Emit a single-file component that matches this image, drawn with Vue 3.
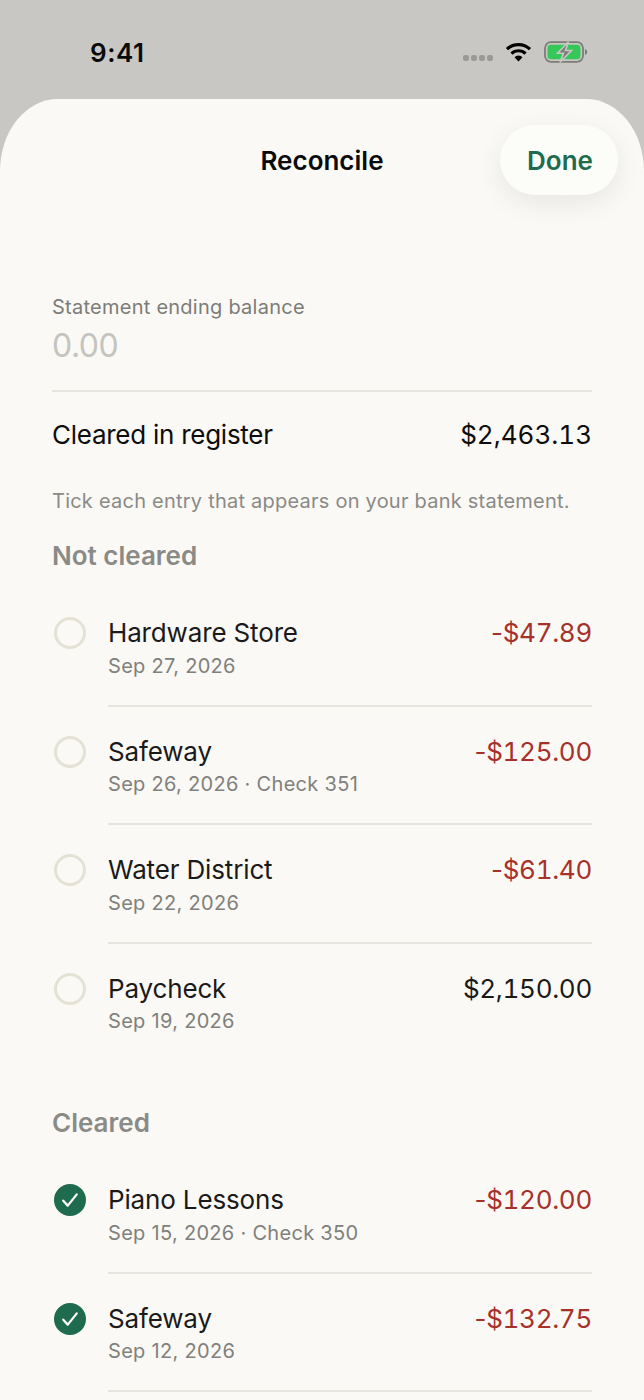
<template>
  <div class="screen">
    <div class="status">
      <span class="time">9:41</span>
      <div class="status-icons">
        <div class="dots"><i v-for="i in 4" :key="i" /></div>
        <svg class="wifi" width="27" height="20" viewBox="0 0 26 20">
          <path d="M1.500 7.200A16.500 16.500 0 0 1 24.500 7.200" fill="none" stroke="#000" stroke-width="3.200" />
          <path d="M6 11.600A10 10 0 0 1 20 11.600" fill="none" stroke="#000" stroke-width="3.200" />
          <path d="M9 15.200L13 19.500L17 15.200A5.600 5.600 0 0 0 9 15.200Z" fill="#000" />
        </svg>
        <svg class="battery" width="44" height="22" viewBox="0 0 44 22">
          <rect x="1" y="1.200" width="38" height="19.600" rx="6" fill="none" stroke="#7d7d78" stroke-width="1.800" />
          <rect x="3.500" y="3.700" width="33" height="14.600" rx="3.500" fill="#34c759" />
          <path d="M41 8v6c1.400-.5 2.200-1.700 2.200-3S42.400 8.500 41 8Z" fill="#7d7d78" />
          <path d="M24.500 0.800L13.500 12.300H19.500L16 21.200L27.500 9.500H21.500Z" fill="#7d7d78" stroke="#c8c7c3" stroke-width="1.600" />
        </svg>
      </div>
    </div>

    <div class="sheet">
      <header class="nav">
        <h1>Reconcile</h1>
        <button class="done">Done</button>
      </header>

      <section class="summary">
        <div class="label">Statement ending balance</div>
        <div class="placeholder">0.00</div>
        <div class="cleared-row">
          <span class="cleared-label">Cleared in register</span>
          <span class="money">$2,463.13</span>
        </div>
        <p class="hint">Tick each entry that appears on your bank statement.</p>
      </section>

      <section v-for="group in groups" :key="group.title" class="group">
        <h2>{{ group.title }}</h2>
        <div v-for="row in group.rows" :key="row.name + row.date" class="row">
          <span class="tick" :class="{ on: group.done }">
            <svg v-if="group.done" width="18" height="16" viewBox="0 0 16 14">
              <path d="M2 7.600L6 12L14 2" fill="none" stroke="#fff" stroke-width="2" stroke-linecap="round" stroke-linejoin="round" />
            </svg>
          </span>
          <div class="row-body">
            <div class="row-text">
              <div class="name">{{ row.name }}</div>
              <div class="date">{{ row.date }}</div>
            </div>
            <div class="amount money" :class="{ neg: row.neg }"><span v-if="row.neg" class="sign">-</span>{{ row.amount }}</div>
          </div>
        </div>
      </section>
    </div>
  </div>
</template>

<script setup>
const groups = [
  {
    title: 'Not cleared',
    done: false,
    rows: [
      { name: 'Hardware Store', date: 'Sep 27, 2026', amount: '$47.89', neg: true },
      { name: 'Safeway', date: 'Sep 26, 2026 · Check 351', amount: '$125.00', neg: true },
      { name: 'Water District', date: 'Sep 22, 2026', amount: '$61.40', neg: true },
      { name: 'Paycheck', date: 'Sep 19, 2026', amount: '$2,150.00', neg: false }
    ]
  },
  {
    title: 'Cleared',
    done: true,
    rows: [
      { name: 'Piano Lessons', date: 'Sep 15, 2026 · Check 350', amount: '$120.00', neg: true },
      { name: 'Safeway', date: 'Sep 12, 2026', amount: '$132.75', neg: true }
    ]
  }
]
</script>

<style>
html,
body {
  margin: 0;
  background: #c8c7c3;
}
</style>

<style scoped>
.screen {
  height: 1400px;
  overflow: hidden;
  background: #c8c7c3;
  font-family: Inter, "Liberation Sans", sans-serif;
  color: #111;
}

.status {
  height: 99px;
  box-sizing: border-box;
  padding: 37px 56px 0 90px;
  display: flex;
  justify-content: space-between;
  align-items: flex-start;
}

.time {
  font-size: 26px;
  line-height: 32px;
  font-weight: 600;
  letter-spacing: 0.5px;
  color: #0a0a0a;
}

.status-icons {
  display: flex;
  align-items: center;
  height: 30px;
}

.dots {
  display: flex;
  gap: 2px;
  margin: 12px 12px 0 0;
}

.dots i {
  width: 6px;
  height: 6px;
  border-radius: 2px;
  background: #9a9a96;
}

.wifi {
  margin-right: 12px;
}

.sheet {
  height: 1301px;
  background: #faf9f5;
  border-radius: 58px 58px 0 0 / 72px 72px 0 0;
  padding: 0 52px;
  box-sizing: border-box;
}

.nav {
  height: 96px;
  position: relative;
  display: flex;
  justify-content: center;
  align-items: flex-end;
}

.nav h1 {
  margin: 0 0 18px;
  font-size: 26px;
  line-height: 32px;
  font-weight: 600;
  color: #0a0a0a;
}

.done {
  position: absolute;
  right: -26px;
  top: 26px;
  width: 118px;
  height: 70px;
  padding: 0 0 0 2px;
  border: 0;
  border-radius: 35px;
  background: #fcfcf8;
  box-shadow: 0 8px 28px rgba(0, 0, 0, 0.08);
  font: 600 26px Inter, "Liberation Sans", sans-serif;
  color: #1f6b4f;
}

.summary {
  padding-top: 99px;
}

.label {
  font-size: 20px;
  line-height: 26px;
  letter-spacing: 0.25px;
  color: #7c7c78;
}

.placeholder {
  margin-top: 6px;
  font-size: 32px;
  line-height: 40px;
  letter-spacing: -0.5px;
  color: #c4c4bf;
  padding-bottom: 24px;
  border-bottom: 2px solid #e6e6e1;
}

.cleared-row {
  display: flex;
  justify-content: space-between;
  font-size: 26px;
  line-height: 32px;
  margin-top: 27px;
  color: #0d0d0d;
}

.cleared-label {
  letter-spacing: -0.26px;
}

.money {
  font-feature-settings: "tnum";
}

.sign {
  font-feature-settings: normal;
}

.hint {
  margin: 37px 0 0;
  font-size: 20px;
  line-height: 26px;
  letter-spacing: 0.23px;
  color: #8a8a86;
}

.group h2 {
  margin: 0 0 16px;
  font-size: 26px;
  line-height: 32px;
  font-weight: 600;
  color: #8a8a86;
}

.summary + .group h2 {
  margin-top: 26px;
}

.group + .group {
  margin-top: 45px;
}

.row {
  display: flex;
  align-items: flex-start;
  gap: 22px;
}

.tick {
  flex: none;
  width: 32px;
  height: 32px;
  margin: 29px 0 0 2px;
  border: 3px solid #e3e2d5;
  border-radius: 50%;
  display: flex;
  align-items: center;
  justify-content: center;
  box-sizing: border-box;
}

.tick.on {
  background: #1f6b4f;
  border-color: #1f6b4f;
}

.row-body {
  flex: 1;
  min-height: 118.500px;
  box-sizing: border-box;
  padding-top: 29px;
  display: flex;
  justify-content: space-between;
  align-items: flex-start;
  border-bottom: 2px solid #e6e6e1;
}

.name {
  font-size: 26px;
  line-height: 32px;
  letter-spacing: -0.15px;
  color: #1a1a1a;
}

.date {
  margin-top: 3.500px;
  font-size: 20px;
  line-height: 26px;
  letter-spacing: 0.3px;
  color: #80807c;
}

.amount {
  font-size: 26px;
  line-height: 32px;
  letter-spacing: -0.3px;
  color: #1a1a1a;
}

.amount.neg {
  color: #a8302a;
}

.group:not(:last-child) .row:last-child .row-body {
  border-bottom: 0;
}
</style>
